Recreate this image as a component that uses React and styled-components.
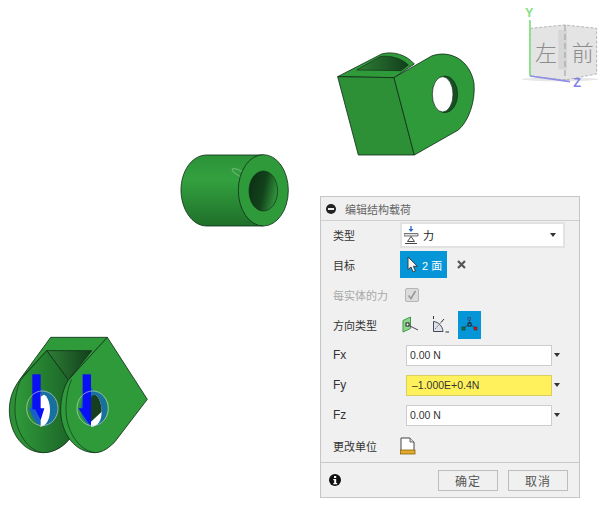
import React from "react";
import styled, { createGlobalStyle } from "styled-components";

const Global = createGlobalStyle`
  html, body { margin: 0; padding: 0; background: #fff; }
  body { font-family: "Liberation Sans", "Noto Sans CJK SC", sans-serif; }
`;

const Canvas = styled.div`
  position: relative;
  width: 605px;
  height: 509px;
  overflow: hidden;
  background: #fff;
`;

const Scene = styled.svg`
  position: absolute;
  left: 0;
  top: 0;
`;

const Panel = styled.div`
  position: absolute;
  left: 320px;
  top: 196px;
  width: 258px;
  height: 300px;
  display: flex;
  flex-direction: column;
  background: #f0f0f0;
  border: 1px solid #c6c6c6;
  color: #333;
  font-size: 11px;
`;

const Header = styled.div`
  height: 24px;
  box-sizing: border-box;
  display: flex;
  align-items: center;
  gap: 9px;
  padding-left: 5px;
  border-bottom: 1px solid #cfcfcf;
  color: #666;
`;

const Body = styled.div`
  flex: 1;
`;

const Row = styled.div`
  height: ${(p) => p.$h}px;
  display: grid;
  grid-template-columns: 67px 1fr;
  align-items: center;
  padding-left: 12px;
`;

const Label = styled.span`
  color: ${(p) => (p.$off ? "#a8a8a8" : "#333")};
  font-size: ${(p) => (p.$latin ? 12 : 11)}px;
`;

const Controls = styled.div`
  display: flex;
  align-items: center;
  gap: ${(p) => p.$gap || 0}px;
`;

const Select = styled.div`
  width: 165px;
  height: 26px;
  box-sizing: border-box;
  display: flex;
  align-items: center;
  gap: 4px;
  padding: 0 7px 0 2px;
  background: #fff;
  border: 2px solid #e2e2e2;
  color: #222;
  font-size: 11px;
`;

const Caret = styled.i`
  width: 0;
  height: 0;
  border-left: 3px solid transparent;
  border-right: 3px solid transparent;
  border-top: 4px solid #333;
  margin-left: ${(p) => p.$ml || "auto"};
`;

const BlueButton = styled.div`
  width: 47px;
  height: 27px;
  box-sizing: border-box;
  display: flex;
  align-items: center;
  gap: 3px;
  padding-left: 7px;
  background: #0696d7;
  color: #fff;
  font-size: 11px;
`;

const IconTile = styled.div`
  width: 23px;
  height: 28px;
  display: flex;
  align-items: center;
  justify-content: center;
  background: ${(p) => (p.$on ? "#0696d7" : "transparent")};
`;

const Check = styled.div`
  width: 12px;
  height: 12px;
  margin-left: 5px;
  display: flex;
  align-items: center;
  justify-content: center;
  background: #dcdcdc;
  border: 1px solid #b5b5b5;
  border-radius: 2px;
`;

const NumberInput = styled.div`
  width: 146px;
  height: 21px;
  margin-left: 6px;
  box-sizing: border-box;
  display: flex;
  align-items: center;
  padding-left: ${(p) => (p.$warn ? 5 : 3)}px;
  background: ${(p) => (p.$warn ? "#fff15c" : "#fff")};
  border: 1px solid ${(p) => (p.$warn ? "#d8cf60" : "#cdcdcd")};
  font-size: 10.5px;
  color: #333;
`;

const Footer = styled.div`
  height: 34px;
  display: flex;
  align-items: center;
  padding: 0 11px 0 8px;
  border-top: 1px solid #c9c9c9;
  gap: 10px;
`;

const Action = styled.div`
  width: 58px;
  height: 19px;
  display: flex;
  align-items: center;
  justify-content: center;
  background: #f0f0f0;
  border: 1px solid #bdbdbd;
  color: #555;
  font-size: 12px;
  letter-spacing: 1px;
`;

const Spacer = styled.div`
  flex: 1;
`;

const MinusIcon = () => (
  <svg width="10" height="10" viewBox="0 0 10 10">
    <circle cx="5" cy="5" r="5" fill="#222" />
    <rect x="2" y="4" width="6" height="2" fill="#eee" />
  </svg>
);

const LoadIcon = () => (
  <svg width="15" height="19" viewBox="0 0 15 19">
    <path d="M7 0v4" stroke="#2a62c8" strokeWidth="1.3" />
    <path d="M4.500 3h5L7 6z" fill="#2a62c8" />
    <path d="M0 7.500h14v2.500H0z" fill="#e2e2e2" stroke="#555" strokeWidth="0.8" />
    <path d="M7 10.500l-3.500 5h7zM1 17.500h12" fill="none" stroke="#444" strokeWidth="1" />
  </svg>
);

const CursorIcon = () => (
  <svg width="12" height="17" viewBox="0 0 12 17">
    <path d="M1 1v12.500l3-2.500 2 5 2.400-1-2-4.700h4z" fill="#f4f4f4" stroke="#333" strokeWidth="0.9" />
  </svg>
);

const CloseIcon = () => (
  <svg width="9" height="9" viewBox="0 0 9 9">
    <path d="M1 1l7 7M8 1l-7 7" stroke="#555" strokeWidth="2.200" />
  </svg>
);

const Tick = () => (
  <svg width="10" height="10" viewBox="0 0 10 10">
    <path d="M1.500 5.500l2.500 3L8.500 1" fill="none" stroke="#9a9a9a" strokeWidth="1.600" />
  </svg>
);

const FaceIcon = () => (
  <svg width="19" height="18" viewBox="0 0 19 18">
    <path d="M1 4.500L8.500 1v11.500L1 16z" fill="#8fd58f" stroke="#3c9a45" strokeWidth="1" />
    <rect x="4" y="7" width="3" height="3" fill="#fff" stroke="#222" strokeWidth="1" />
    <path d="M7 9.500l9 4.500" stroke="#5b3a62" strokeWidth="1" />
  </svg>
);

const AngleIcon = () => (
  <svg width="18" height="18" viewBox="0 0 18 18">
    <path d="M1.500 0v3" stroke="#333" strokeWidth="1" />
    <path d="M1.500 5.500c5 .5 9 4.500 9.500 10H1.500z" fill="#dfe2ea" stroke="#444a5c" strokeWidth="1" />
    <path d="M3 13L10 5.500" stroke="#555" strokeWidth="0.800" strokeDasharray="2 1" />
    <path d="M12 3L9 6.500M13.500 16H17" stroke="#333" strokeWidth="1" />
  </svg>
);

const AxesIcon = () => (
  <svg width="17" height="17" viewBox="0 0 17 17">
    <path d="M8.500 4v4M7 9l-3 2M10 9l3 2" stroke="#1a3f66" strokeWidth="0.800" />
    <rect x="7" y="1.500" width="2.500" height="2.500" fill="none" stroke="#30568c" strokeWidth="1" />
    <rect x="7" y="7" width="3" height="3" fill="none" stroke="#222" strokeWidth="1" />
    <rect x="1" y="11" width="3" height="3" fill="#1f7a2a" stroke="#123" strokeWidth="0.500" />
    <rect x="13" y="11" width="3" height="3" fill="#c8201c" stroke="#511" strokeWidth="0.500" />
  </svg>
);

const UnitsIcon = () => (
  <svg width="16" height="18" viewBox="0 0 16 18">
    <path d="M1 13V1h9l4 4v8" fill="#fff" stroke="#444" strokeWidth="1" />
    <path d="M10 1v4h4" fill="#ddd" stroke="#444" strokeWidth="0.800" />
    <rect x="0.500" y="13" width="14.500" height="4" fill="#e3a92b" stroke="#8a6410" strokeWidth="0.800" />
  </svg>
);

const InfoIcon = () => (
  <svg width="12" height="12" viewBox="0 0 12 12">
    <circle cx="6" cy="6" r="6" fill="#111" />
    <rect x="5" y="2" width="2.200" height="2" fill="#fff" />
    <path d="M4.300 5h2.900v4h1v1.200H4.300V9h.9V6.200h-.9z" fill="#fff" />
  </svg>
);

const Bracket = () => (
  <g transform="translate(325 40) scale(0.3333)" stroke="#12301a" strokeWidth="2.500" strokeLinejoin="round">
    <path d="M38 110L170 42C205 32 245 45 268 72L207 113z" fill="#2f9a3a" />
    <path d="M95 90L165 50C195 45 230 55 250 75L228 92z" fill="url(#innerDark)" strokeWidth="2" />
    <path d="M38 110L207 113L268 345H100z" fill="#2d8f36" />
    <path d="M207 113L320 48C375 28 435 60 447 130C452 185 430 245 400 270L268 345z" fill="#2f9a3a" />
    <ellipse cx="360" cy="163" rx="38" ry="55" fill="#174f22" strokeWidth="2" />
    <ellipse cx="353" cy="163" rx="31" ry="53" fill="#fff" strokeWidth="2" />
  </g>
);

const Tube = () => (
  <g transform="translate(175 145) scale(0.3333)" stroke="#12301a" strokeWidth="2.500">
    <path d="M95 30H265V243H95C50 243 18 190 18 135C18 80 50 30 95 30z" fill="url(#tubeBody)" />
    <ellipse cx="200" cy="88" rx="32" ry="8" transform="rotate(28 200 88)" fill="none" stroke="#8fc79a" strokeWidth="3" opacity="0.6" />
    <ellipse cx="265" cy="136" rx="75" ry="107" fill="#2f9a3a" />
    <ellipse cx="265" cy="138" rx="43" ry="60" fill="url(#holeDark)" strokeWidth="2" />
  </g>
);

const Clevis = () => (
  <g transform="translate(0 330) scale(0.3333)" stroke="#12301a" strokeWidth="2.500" strokeLinejoin="round">
    <path d="M152 22H322L205 150L60 148z" fill="#2f9a3a" />
    <path d="M140 62H275L205 150z" fill="url(#innerDark)" />
    <path d="M140 62L60 148C40 175 28 205 28 240C28 310 70 368 130 368C165 368 195 345 210 325L205 150z" fill="#2d8f36" />
    <path d="M140 62L62 150C50 175 45 205 45 240C45 305 85 365 130 368C165 368 195 345 210 325L205 150z" fill="url(#clevisFace)" strokeWidth="2" />
    <path d="M322 22L205 150C190 175 182 205 182 240C182 310 225 368 285 368C310 368 330 350 345 335L442 208z" fill="#2f9a3a" />
    <path d="M215 148C205 170 198 200 198 240C198 300 235 362 285 368" fill="none" strokeWidth="2" />

    <g stroke="none">
      <ellipse cx="132" cy="236" rx="40" ry="52" fill="#17709f" />
      <path d="M120 190C140 190 150 215 150 240C150 265 140 290 120 290z" fill="#fff" />
      <path d="M122 170L135 192L122 200z" fill="#17709f" />
      <path d="M85 235H122V290z" fill="#1a5fc8" />
      <rect x="97" y="133" width="25" height="105" fill="#0a10f5" />
      <path d="M104 235H133L122 270z" fill="#0a10f5" />

      <ellipse cx="282" cy="236" rx="40" ry="52" fill="#17709f" />
      <path d="M273 190C295 190 305 220 305 245C305 270 295 290 273 290z" fill="#fff" />
      <path d="M273 190C295 190 305 220 305 245L273 275z" fill="#153f1f" />
      <path d="M273 170L286 192L273 200z" fill="#17709f" />
      <rect x="248" y="133" width="25" height="105" fill="#0a10f5" />
      <path d="M235 235H273V290z" fill="#0a10f5" />
    </g>

    <ellipse cx="127" cy="235" rx="47" ry="52" fill="none" stroke="#c5d8cb" strokeWidth="2.500" opacity="0.8" />
    <ellipse cx="278" cy="235" rx="47" ry="52" fill="none" stroke="#c5d8cb" strokeWidth="2.500" opacity="0.8" />
  </g>
);

const ViewCube = () => (
  <g transform="translate(515 0) scale(0.3333)">
    <ellipse cx="135" cy="238" rx="115" ry="6" fill="#ddd" opacity="0.7" />
    <path d="M45 85L150 75L245 85V222L150 240L45 228z" fill="#e4e4e4" stroke="#aaa" strokeWidth="2.500" strokeDasharray="9 5" />
    <rect x="130" y="90" width="26" height="118" fill="#d6d6d6" />
    <path d="M150 75V240" stroke="#9c9c9c" strokeWidth="3" strokeDasharray="18 9" />
    <path d="M45 60V228" stroke="#7ee07e" strokeWidth="5" />
    <path d="M45 228L165 245" stroke="#8d8de6" strokeWidth="5" />
    <text x="60" y="182" fontSize="66" fill="#8c8c8c" fontFamily="Noto Sans CJK SC, sans-serif" fontWeight="300">左</text>
    <text x="170" y="182" fontSize="66" fill="#8c8c8c" fontFamily="Noto Sans CJK SC, sans-serif" fontWeight="300">前</text>
    <text x="30" y="52" fontSize="38" fill="#86e086" fontFamily="Liberation Sans, sans-serif" fontWeight="700">Y</text>
    <text x="175" y="262" fontSize="38" fill="#8080e6" fontFamily="Liberation Sans, sans-serif" fontWeight="700">Z</text>
  </g>
);

export default function App() {
  return (
    <Canvas>
      <Global />
      <Scene width="605" height="509" viewBox="0 0 605 509">
        <defs>
          <linearGradient id="tubeBody" x1="0" y1="0" x2="0" y2="1">
            <stop offset="0" stopColor="#2c9238" />
            <stop offset="0.35" stopColor="#33a13f" />
            <stop offset="1" stopColor="#1f6f2a" />
          </linearGradient>
          <linearGradient id="holeDark" x1="0" y1="0" x2="1" y2="0.3">
            <stop offset="0" stopColor="#0c2c14" />
            <stop offset="0.6" stopColor="#12431b" />
            <stop offset="1" stopColor="#2f8a3a" />
          </linearGradient>
          <linearGradient id="innerDark" x1="0" y1="0" x2="1" y2="0">
            <stop offset="0" stopColor="#2f7f36" />
            <stop offset="1" stopColor="#123f1b" />
          </linearGradient>
          <linearGradient id="clevisFace" x1="0" y1="0" x2="1" y2="0">
            <stop offset="0" stopColor="#2f9a3a" />
            <stop offset="1" stopColor="#1c6628" />
          </linearGradient>
        </defs>
        <Bracket />
        <Tube />
        <Clevis />
        <ViewCube />
      </Scene>

      <Panel>
        <Header>
          <MinusIcon />
          <span>编辑结构载荷</span>
        </Header>
        <Body>
          <Row $h={28}>
            <Label>类型</Label>
            <Select>
              <LoadIcon />
              力
              <Caret />
            </Select>
          </Row>
          <Row $h={31}>
            <Label>目标</Label>
            <Controls $gap={10}>
              <BlueButton>
                <CursorIcon />2 面
              </BlueButton>
              <CloseIcon />
            </Controls>
          </Row>
          <Row $h={29}>
            <Label $off>每实体的力</Label>
            <Check>
              <Tick />
            </Check>
          </Row>
          <Row $h={31}>
            <Label>方向类型</Label>
            <Controls $gap={6}>
              <IconTile>
                <FaceIcon />
              </IconTile>
              <IconTile>
                <AngleIcon />
              </IconTile>
              <IconTile $on>
                <AxesIcon />
              </IconTile>
            </Controls>
          </Row>
          <Row $h={30}>
            <Label $latin>Fx</Label>
            <Controls>
              <NumberInput>0.00 N</NumberInput>
              <Caret $ml="2px" />
            </Controls>
          </Row>
          <Row $h={30}>
            <Label $latin>Fy</Label>
            <Controls>
              <NumberInput $warn>–1.000E+0.4N</NumberInput>
              <Caret $ml="2px" />
            </Controls>
          </Row>
          <Row $h={30}>
            <Label $latin>Fz</Label>
            <Controls>
              <NumberInput>0.00 N</NumberInput>
              <Caret $ml="2px" />
            </Controls>
          </Row>
          <Row $h={31}>
            <Label>更改单位</Label>
            <Controls>
              <UnitsIcon />
            </Controls>
          </Row>
        </Body>
        <Footer>
          <InfoIcon />
          <Spacer />
          <Action>确定</Action>
          <Action>取消</Action>
        </Footer>
      </Panel>
    </Canvas>
  );
}
